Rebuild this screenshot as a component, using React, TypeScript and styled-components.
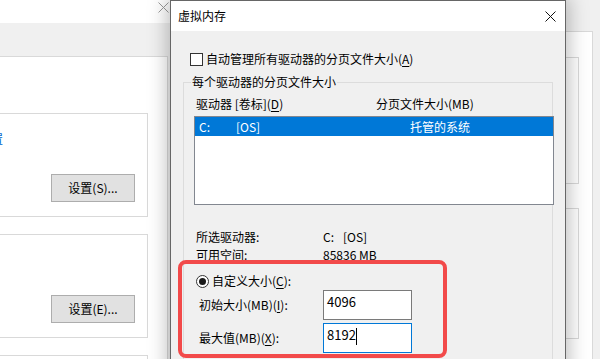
import React from "react";
import styled, { createGlobalStyle } from "styled-components";

const GlobalStyle = createGlobalStyle`
  html, body { margin: 0; padding: 0; background: #ffffff; }
  body {
    font-family: "Noto Sans CJK SC", "Noto Sans", sans-serif;
    font-size: 12px;
    color: #000;
  }
  * { box-sizing: border-box; }
`;

const Screen = styled.div`
  position: relative;
  width: 600px;
  height: 359px;
  overflow: hidden;
  display: flex;
  background: #f0f0f0;
  font-family: "Noto Sans CJK SC", "Noto Sans", sans-serif;
  font-size: 12px;
  line-height: 18px;
  color: #000;
`;

/* ---------- background window (left) ---------- */
const LeftWindow = styled.div`
  width: 170px;
  flex-shrink: 0;
  display: flex;
  flex-direction: column;
  min-height: 0;
`;

const BgTitle = styled.div`
  height: 23px;
  flex-shrink: 0;
  background: #ffffff;
  display: flex;
  justify-content: flex-end;
  align-items: flex-start;
  padding: 2px 1px 0 0;
`;

const ToolBand = styled.div`
  height: 33px;
  flex-shrink: 0;
  background: #f0f0f0;
`;

const SidePanel = styled.div`
  flex: 1;
  min-height: 0;
  overflow: hidden;
  width: 168px;
  background: #ffffff;
  border-top: 1px solid #d9d9d9;
  border-right: 1px solid #d9d9d9;
  padding-top: 56px;
  display: flex;
  flex-direction: column;
  gap: 17px;
`;

const SettingsCard = styled.div`
  margin-left: -10px;
  width: 158px;
  height: 104px;
  flex-shrink: 0;
  border: 1px solid #d9d9d9;
  display: flex;
  flex-direction: column;
  padding: 16px 12px 14px 0;
`;

const CutLink = styled.span`
  align-self: flex-start;
  color: #0066cc;
`;

const BgButton = styled.div`
  align-self: flex-end;
  margin-top: auto;
  width: 84px;
  height: 28px;
  background: #e1e1e1;
  border: 1px solid #adadad;
  display: flex;
  align-items: center;
  justify-content: center;
`;

const Spacer = styled.div`
  flex: 1;
  background: #ffffff;
`;

/* ---------- background window (right) ---------- */
const RightWindow = styled.div`
  width: 220px;
  flex-shrink: 0;
  display: flex;
  flex-direction: column;
  min-height: 0;
  background: #f0f0f0;
`;

const RightTop = styled.div`
  height: 31px;
  flex-shrink: 0;
`;

const RightPanel = styled.div`
  flex: 1;
  min-height: 0;
  overflow: hidden;
  margin-right: 7px;
  background: #ffffff;
  border-top: 1px solid #d9d9d9;
  border-right: 1px solid #d9d9d9;
  padding: 25px 13px 0 0;
  display: flex;
  flex-direction: column;
  gap: 24px;
`;

const RightCard = styled.div<{ $h: number }>`
  height: ${(p) => p.$h}px;
  flex-shrink: 0;
  border: 1px solid #d9d9d9;
`;

/* ---------- dialog ---------- */
const Dialog = styled.div`
  position: absolute;
  left: 170px;
  top: 0;
  width: 396px;
  height: 390px;
  background: #f0f0f0;
  border: 1px solid #666666;
  box-shadow: 0 0 18px 3px rgba(0, 0, 0, 0.26);
  display: flex;
  flex-direction: column;
`;

const TitleBar = styled.div`
  height: 30px;
  flex-shrink: 0;
  background: #ffffff;
  display: flex;
  align-items: center;
  justify-content: space-between;
  padding: 0 9px 0 7px;
`;

const Body = styled.div`
  flex: 1;
  display: flex;
  flex-direction: column;
  padding: 19px 12px 0 12px;
`;

const CheckRow = styled.div`
  height: 18px;
  flex-shrink: 0;
  display: flex;
  align-items: center;
  gap: 3px;
  padding-left: 7px;
`;

const CheckBox = styled.span`
  width: 13px;
  height: 13px;
  border: 1px solid #333333;
  background: #ffffff;
`;

const Key = styled.u`
  text-decoration: underline;
  text-underline-offset: 2px;
`;

const GroupBox = styled.div`
  position: relative;
  flex: 1;
  margin-top: 14px;
  border: 1px solid #dcdcdc;
  padding: 12px 0 0 10px;
  display: flex;
  flex-direction: column;
`;

const Legend = styled.span`
  position: absolute;
  top: -10px;
  left: 7px;
  padding: 0 1px;
  background: #f0f0f0;
`;

const HeaderRow = styled.div`
  display: grid;
  grid-template-columns: 180px auto;
  height: 18px;
  flex-shrink: 0;
  padding-left: 2px;
  align-items: center;
`;

const ListBox = styled.div`
  margin-top: 3px;
  width: calc(100% + 2px);
  height: 89px;
  flex-shrink: 0;
  background: #ffffff;
  border: 1px solid #828790;
`;

const ListRow = styled.div<{ $selected?: boolean }>`
  display: grid;
  grid-template-columns: 37px 174px auto;
  height: 19px;
  align-items: center;
  padding-left: 4px;
  background: ${(p) => (p.$selected ? "#0078d7" : "transparent")};
  color: ${(p) => (p.$selected ? "#ffffff" : "#000000")};
`;

const InfoBlock = styled.div`
  margin-top: 23px;
  display: flex;
  flex-direction: column;
  flex-shrink: 0;
`;

const InfoRow = styled.div`
  display: grid;
  grid-template-columns: 127px auto;
  height: 18px;
  align-items: center;
  padding-left: 2px;
`;

const DriveValue = styled.span`
  display: flex;
  gap: 9px;
`;

const RadioRow = styled.div`
  margin-top: 8px;
  height: 18px;
  flex-shrink: 0;
  display: flex;
  align-items: center;
  gap: 3px;
  padding-left: 2px;
`;

const Radio = styled.span`
  width: 13px;
  height: 13px;
  border-radius: 50%;
  border: 1px solid #333333;
  background: #ffffff;
  display: flex;
  align-items: center;
  justify-content: center;
  &::after {
    content: "";
    width: 7px;
    height: 7px;
    border-radius: 50%;
    background: #1a1a1a;
  }
`;

const FieldRow = styled.div<{ $gap: number }>`
  margin-top: ${(p) => p.$gap}px;
  display: grid;
  grid-template-columns: 129px 89px;
  height: 30px;
  flex-shrink: 0;
  align-items: center;
`;

const FieldLabel = styled.span`
  padding-left: 5px;
`;

const TextBox = styled.div<{ $focused?: boolean }>`
  height: 30px;
  background: #ffffff;
  border: 1px solid ${(p) => (p.$focused ? "#0078d7" : "#7a7a7a")};
  padding: 1px 3px 0;
  font-size: 13px;
  line-height: 20px;
  display: flex;
  align-items: flex-start;
`;

const Caret = styled.span`
  width: 1px;
  height: 17px;
  margin-top: 3px;
  background: #000000;
`;

const Highlight = styled.div`
  position: absolute;
  left: 7px;
  top: 259px;
  width: 269px;
  height: 98px;
  border: 4px solid #f24a4a;
  border-radius: 8px;
  pointer-events: none;
`;

const CloseGlyph = ({ color }: { color: string }) => (
  <svg width="11" height="11" viewBox="0 0 11 11">
    <path d="M0.5 0.5 L10.5 10.5 M10.5 0.5 L0.5 10.5" stroke={color} strokeWidth="1" fill="none" />
  </svg>
);

export default function App() {
  return (
    <>
      <GlobalStyle />
      <Screen>
        <LeftWindow>
          <BgTitle>
            <CloseGlyph color="#9a9a9a" />
          </BgTitle>
          <ToolBand />
          <SidePanel>
            <SettingsCard>
              <CutLink>置</CutLink>
              <BgButton>设置(S)...</BgButton>
            </SettingsCard>
            <SettingsCard>
              <BgButton>设置(E)...</BgButton>
            </SettingsCard>
            <SettingsCard />
          </SidePanel>
        </LeftWindow>
        <Spacer />
        <RightWindow>
          <RightTop />
          <RightPanel>
            <RightCard $h={127} />
            <RightCard $h={131} />
          </RightPanel>
        </RightWindow>

        <Dialog>
          <TitleBar>
            <span>虚拟内存</span>
            <CloseGlyph color="#111111" />
          </TitleBar>
          <Body>
            <CheckRow>
              <CheckBox />
              <span>
                自动管理所有驱动器的分页文件大小(<Key>A</Key>)
              </span>
            </CheckRow>
            <GroupBox>
              <Legend>每个驱动器的分页文件大小</Legend>
              <HeaderRow>
                <span>
                  驱动器 [卷标](<Key>D</Key>)
                </span>
                <span>分页文件大小(MB)</span>
              </HeaderRow>
              <ListBox>
                <ListRow $selected>
                  <span>C:</span>
                  <span>[OS]</span>
                  <span>托管的系统</span>
                </ListRow>
              </ListBox>
              <InfoBlock>
                <InfoRow>
                  <span>所选驱动器:</span>
                  <DriveValue>
                    <span>C:</span>
                    <span>[OS]</span>
                  </DriveValue>
                </InfoRow>
                <InfoRow>
                  <span>可用空间:</span>
                  <span>85836 MB</span>
                </InfoRow>
              </InfoBlock>
              <RadioRow>
                <Radio />
                <span>
                  自定义大小(<Key>C</Key>):
                </span>
              </RadioRow>
              <FieldRow $gap={0}>
                <FieldLabel>
                  初始大小(MB)(<Key>I</Key>):
                </FieldLabel>
                <TextBox>4096</TextBox>
              </FieldRow>
              <FieldRow $gap={3}>
                <FieldLabel>
                  最大值(MB)(<Key>X</Key>):
                </FieldLabel>
                <TextBox $focused>
                  8192
                  <Caret />
                </TextBox>
              </FieldRow>
            </GroupBox>
          </Body>
          <Highlight />
        </Dialog>
      </Screen>
    </>
  );
}
